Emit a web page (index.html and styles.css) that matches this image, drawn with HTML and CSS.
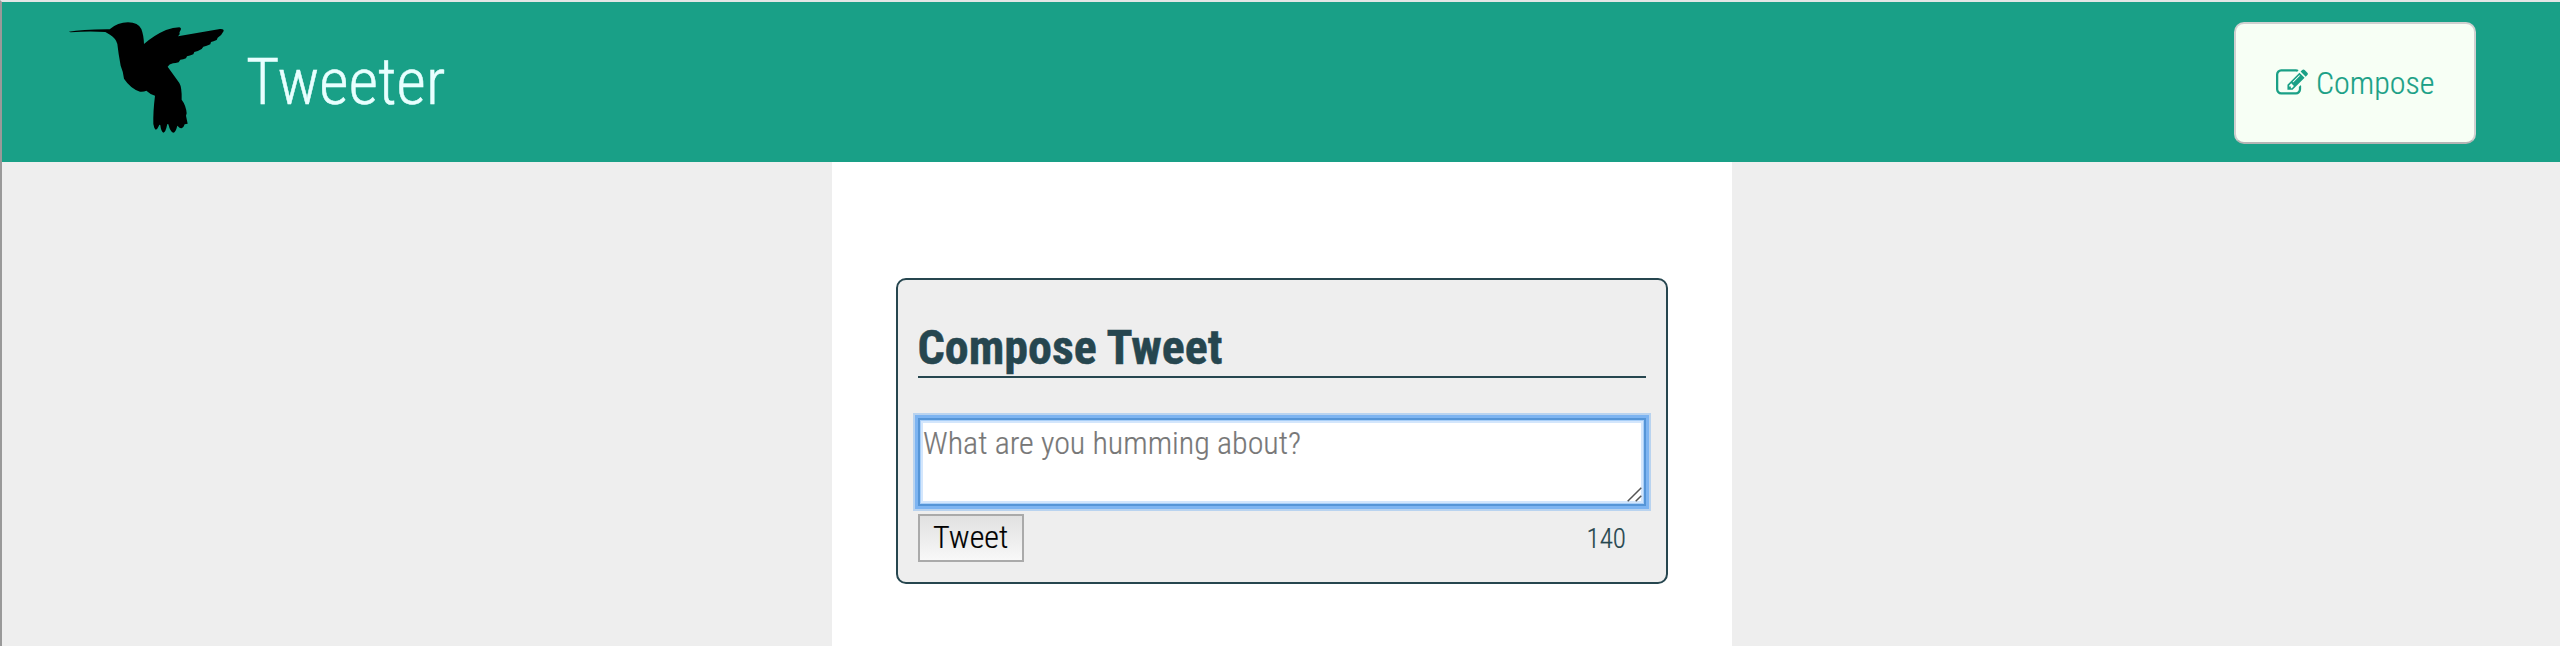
FILE: index.html
```html
<!DOCTYPE html>
<html lang="en">
<head>
<meta charset="utf-8">
<title>Tweeter</title>
<link rel="stylesheet" href="styles.css">
</head>
<body>
<div class="page">
  <header class="nav">
    <svg class="bird" viewBox="0 0 600 450" aria-hidden="true"><path d="M56 95Q95 89 171 88L179 88Q203 67 234 67Q265 68 274 87Q281 105 282 132Q313 105 348 90Q370 82 388 82Q396 84 391 92Q387 96 389 103L384 109L510 87Q522 86 521 93Q516 105 503 113L500 120Q490 124 483 126L481 133Q470 138 460 140L455 147Q443 154 433 156L430 163Q419 168 411 169L408 175Q400 179 391 179L386 187Q376 190 369 190Q357 193 353 200L388 249Q396 262 395 299Q408 316 410 340L408 347L413 371L404 373Q401 383 395 385Q389 385 382 377Q377 397 370 398Q361 397 355 373Q352 370 351 376Q347 397 340 398Q333 395 331 376Q329 372 326 379Q322 389 317 389Q312 385 310 372Q309 335 315 287Q298 281 289 272Q281 276 270 275Q242 266 222 236Q219 213 212 197Q205 160 202 132Q198 115 180 104L166 96Q116 92 62 97Z"/></svg>
    <h1 class="brand">Tweeter</h1>
    <button class="compose" type="button">
      <svg class="pencil" viewBox="0 0 1792 1792" aria-hidden="true"><path d="M888 1184l116-116-152-152-116 116v56h96v96h56zm440-720q-16-16-33 1l-350 350q-17 17-1 33t33-1l350-350q17-17 1-33zm80 594v190q0 119-84.500 203.500t-203.500 84.500h-832q-119 0-203.500-84.500t-84.500-203.500v-832q0-119 84.500-203.500t203.500-84.500h832q63 0 117 25 15 7 18 23 3 17-9 29l-49 49q-14 14-32 8-23-6-45-6h-832q-66 0-113 47t-47 113v832q0 66 47 113t113 47h832q66 0 113-47t47-113v-126q0-13 9-22l64-64q15-15 35-7t20 29zm-96-738l288 288-672 672h-288v-288zm444 132l-92 92-288-288 92-92q28-28 68-28t68 28l152 152q28 28 28 68t-28 68z"/></svg>
      <span class="compose-label">Compose</span>
    </button>
  </header>
  <main class="container">
    <section class="new-tweet">
      <h2 class="title">Compose Tweet</h2>
      <div class="field">
        <span class="placeholder">What are you humming about?</span>
        <svg class="grip" viewBox="0 0 15 15" aria-hidden="true"><path d="M.7 14.300L14.300.7M8.700 14.300L14.300 8.700"/></svg>
      </div>
      <div class="actions">
        <button class="submit" type="button">Tweet</button>
        <span class="counter">140</span>
      </div>
    </section>
  </main>
</div>
</body>
</html>
```

FILE: styles.css
```css
* { box-sizing: border-box; }
html { height: 100%; }
body {
  margin: 0;
  height: 100%;
  background: #eee;
  color: #26464f;
  font-family: "Roboto Condensed", Roboto, sans-serif;
  font-stretch: 75%;
  font-weight: 300;
  -webkit-text-stroke: 0.2px currentColor;
  overflow: hidden;
}
.page {
  height: 646px;
  display: flex;
  flex-direction: column;
  border-top: 2px solid #e3e6e6;
  border-left: 2px solid #999;
}
.nav {
  height: 160px;
  flex: none;
  display: flex;
  align-items: center;
  background: #19a087;
  padding-right: 84px;
}
.bird { width: 200px; height: 150px; margin: -14px 0 0 48px; }
.brand {
  margin: 2px 0 0 -4px;
  font-size: 64px;
  font-weight: 300;
  line-height: 76px;
  color: #e8ffff;
  -webkit-text-stroke-width: 0.5px;
}
.compose {
  margin: 2px 0 0 auto;
  width: 242px;
  height: 122px;
  padding: 0 0 0 40px;
  display: flex;
  align-items: center;
  border: 2px solid #d0d0d0;
  border-bottom-color: #b5b5b5;
  border-radius: 10px;
  background: #f7fff5;
  color: #1aa086;
  font: inherit;
  font-size: 32px;
}
.pencil { width: 32px; height: 32px; fill: currentColor; }
.compose-label { margin-left: 8px; }
.container {
  width: 900px;
  flex: 1;
  margin-left: 830px;
  padding: 116px 64px 0;
  background: #fff;
}
.new-tweet {
  height: 306px;
  padding: 40px 20px 0;
  border: 2px solid #26464f;
  border-radius: 10px;
  background: #eee;
}
.title {
  margin: 0;
  height: 58px;
  border-bottom: 2px solid #26464f;
  font-size: 48px;
  font-weight: 700;
  line-height: 56px;
  text-indent: -0.5px;
  -webkit-text-stroke-width: 0.5px;
}
.field {
  margin-top: 40px;
  height: 88px;
  display: flex;
  justify-content: space-between;
  padding: 4px 2px 2px 3px;
  border: 2px solid #5595d7;
  background: #fff;
  box-shadow: inset 0 0 0 1px #a9cff8, inset 0 0 0 3px #d3e6fc, 0 0 0 3px #7db4f1, 0 0 0 5px #b9d3ef;
  color: #777;
  font-size: 32px;
  line-height: 38px;
}
.grip { width: 15px; height: 15px; align-self: flex-end; fill: none; stroke: #555; stroke-width: 1.500; }
.actions { margin-top: 8px; display: flex; justify-content: space-between; }
.submit {
  width: 106px;
  height: 48px;
  padding: 0 0 2px 13px;
  border: 2px solid #aaa;
  background: linear-gradient(#e1e1e1, #f8f8f8);
  color: #000;
  font: inherit;
  font-size: 32px;
  line-height: 38px;
  text-align: left;
}
.counter { margin-right: 20px; font-size: 27px; line-height: 50px; height: 48px; }
```
